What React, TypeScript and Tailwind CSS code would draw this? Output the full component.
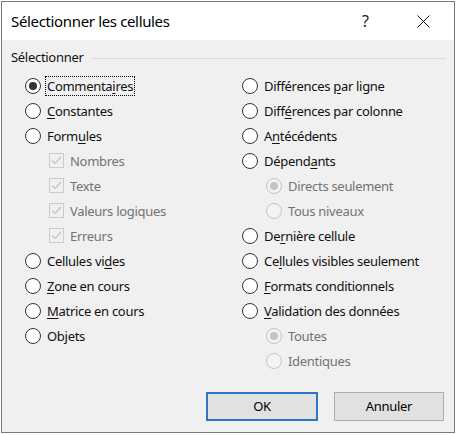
import React from 'react';

type Item = {
    label: string;
    u?: number; // index of the access-key letter
    kind: 'radio' | 'check' | 'sub';
    checked?: boolean;
    disabled?: boolean;
    focus?: boolean;
};

const left: Item[] = [
    { label: 'Commentaires', u: 8, kind: 'radio', checked: true, focus: true },
    { label: 'Constantes', u: 0, kind: 'radio' },
    { label: 'Formules', u: 4, kind: 'radio' },
    { label: 'Nombres', kind: 'check', checked: true, disabled: true },
    { label: 'Texte', kind: 'check', checked: true, disabled: true },
    { label: 'Valeurs logiques', kind: 'check', checked: true, disabled: true },
    { label: 'Erreurs', kind: 'check', checked: true, disabled: true },
    { label: 'Cellules vides', u: 11, kind: 'radio' },
    { label: 'Zone en cours', u: 0, kind: 'radio' },
    { label: 'Matrice en cours', u: 0, kind: 'radio' },
    { label: 'Objets', u: 2, kind: 'radio' },
];

const right: Item[] = [
    { label: 'Différences par ligne', u: 12, kind: 'radio' },
    { label: 'Différences par colonne', u: 4, kind: 'radio' },
    { label: 'Antécédents', u: 1, kind: 'radio' },
    { label: 'Dépendants', u: 6, kind: 'radio' },
    { label: 'Directs seulement', kind: 'sub', checked: true, disabled: true },
    { label: 'Tous niveaux', kind: 'sub', disabled: true },
    { label: 'Dernière cellule', u: 2, kind: 'radio' },
    { label: 'Cellules visibles seulement', u: 2, kind: 'radio' },
    { label: 'Formats conditionnels', u: 0, kind: 'radio' },
    { label: 'Validation des données', u: 0, kind: 'radio' },
    { label: 'Toutes', kind: 'sub', checked: true, disabled: true },
    { label: 'Identiques', kind: 'sub', disabled: true },
];

function Label({ text, u }: { text: string; u?: number }) {
    if (u === undefined) return <>{text}</>;
    return (
        <>
            {text.slice(0, u)}
            <span className="underline underline-offset-2">{text[u]}</span>
            {text.slice(u + 1)}
        </>
    );
}

function Radio({ checked, disabled }: { checked?: boolean; disabled?: boolean }) {
    return (
        <span
            className={`flex h-[16px] w-[16px] shrink-0 items-center justify-center rounded-full border ${
                disabled ? 'border-[#c4c4c4] bg-[#f3f3f3]' : 'border-[#333333] bg-white'
            }`}
        >
            {checked && (
                <span
                    className={`h-[8px] w-[8px] rounded-full ${disabled ? 'bg-[#c4c4c4]' : 'bg-[#333333]'}`}
                />
            )}
        </span>
    );
}

function Check() {
    return (
        <span className="flex h-[15px] w-[15px] shrink-0 items-center justify-center border border-[#cccccc] bg-[#f0f0f0]">
            <svg width="11" height="9" viewBox="0 0 11 9" fill="none">
                <path d="M1 4.5 L4 7.5 L10 1" stroke="#c2c2c2" strokeWidth="1.2" />
            </svg>
        </span>
    );
}

function Row({ item }: { item: Item }) {
    const indent = item.kind === 'radio' ? '' : 'pl-[24px]';
    return (
        <div className={`flex h-[25px] items-center ${indent}`}>
            {item.kind === 'check' ? (
                <Check />
            ) : (
                <Radio checked={item.checked} disabled={item.disabled} />
            )}
            <span
                className={`${item.kind === 'check' ? 'ml-[4px]' : 'ml-[4px]'} px-[1px] leading-[18px] ${
                    item.focus ? 'border border-dotted border-black' : 'border border-transparent'
                } ${item.disabled ? 'text-[#737373]' : 'text-[#111111]'}`}
            >
                <Label text={item.label} u={item.u} />
            </span>
        </div>
    );
}

export default function App() {
    return (
        <div className="h-[435px] w-[459px] bg-white pt-[1px] pl-[1px] font-['Noto_Sans',sans-serif]">
            <div className="flex h-[432px] w-[454px] flex-col border border-[#7a7a7a] bg-[#f0f0f0]">
                <div className="flex h-[38px] shrink-0 items-center bg-white pl-[9px] pr-[24px]">
                    <span className="text-[15px] tracking-[-0.35px] text-black">Sélectionner les cellules</span>
                    <span className="ml-auto text-[16px] text-[#222]">?</span>
                    <svg className="ml-[48px]" width="13" height="13" viewBox="0 0 13 13">
                        <path d="M0.5 0.5 L12.5 12.5 M12.5 0.5 L0.5 12.5" stroke="#111" strokeWidth="1" />
                    </svg>
                </div>

                <div className="flex flex-1 flex-col pl-[9px] pr-[8px] pt-[10px] text-[13px] tracking-[-0.3px]">
                    <div className="flex h-[16px] items-center">
                        <span className="text-[#111111]">Sélectionner</span>
                        <span className="ml-[8px] h-px flex-1 bg-[#dcdcdc]" />
                    </div>

                    <div className="mt-[7px] grid grid-cols-[217px_1fr] pl-[14px]">
                        <div>
                            {left.map((item) => (
                                <Row key={item.label} item={item} />
                            ))}
                        </div>
                        <div>
                            {right.map((item) => (
                                <Row key={item.label} item={item} />
                            ))}
                        </div>
                    </div>

                    <div className="mt-auto mb-[11px] flex justify-end gap-[16px] pr-[2px]">
                        <button className="h-[29px] w-[112px] border-2 border-[#2f75c4] bg-[#e1e1e1] text-[13px] text-black">
                            OK
                        </button>
                        <button className="h-[29px] w-[110px] border border-[#adadad] bg-[#e1e1e1] text-[13px] text-black">
                            Annuler
                        </button>
                    </div>
                </div>
            </div>
        </div>
    );
}
